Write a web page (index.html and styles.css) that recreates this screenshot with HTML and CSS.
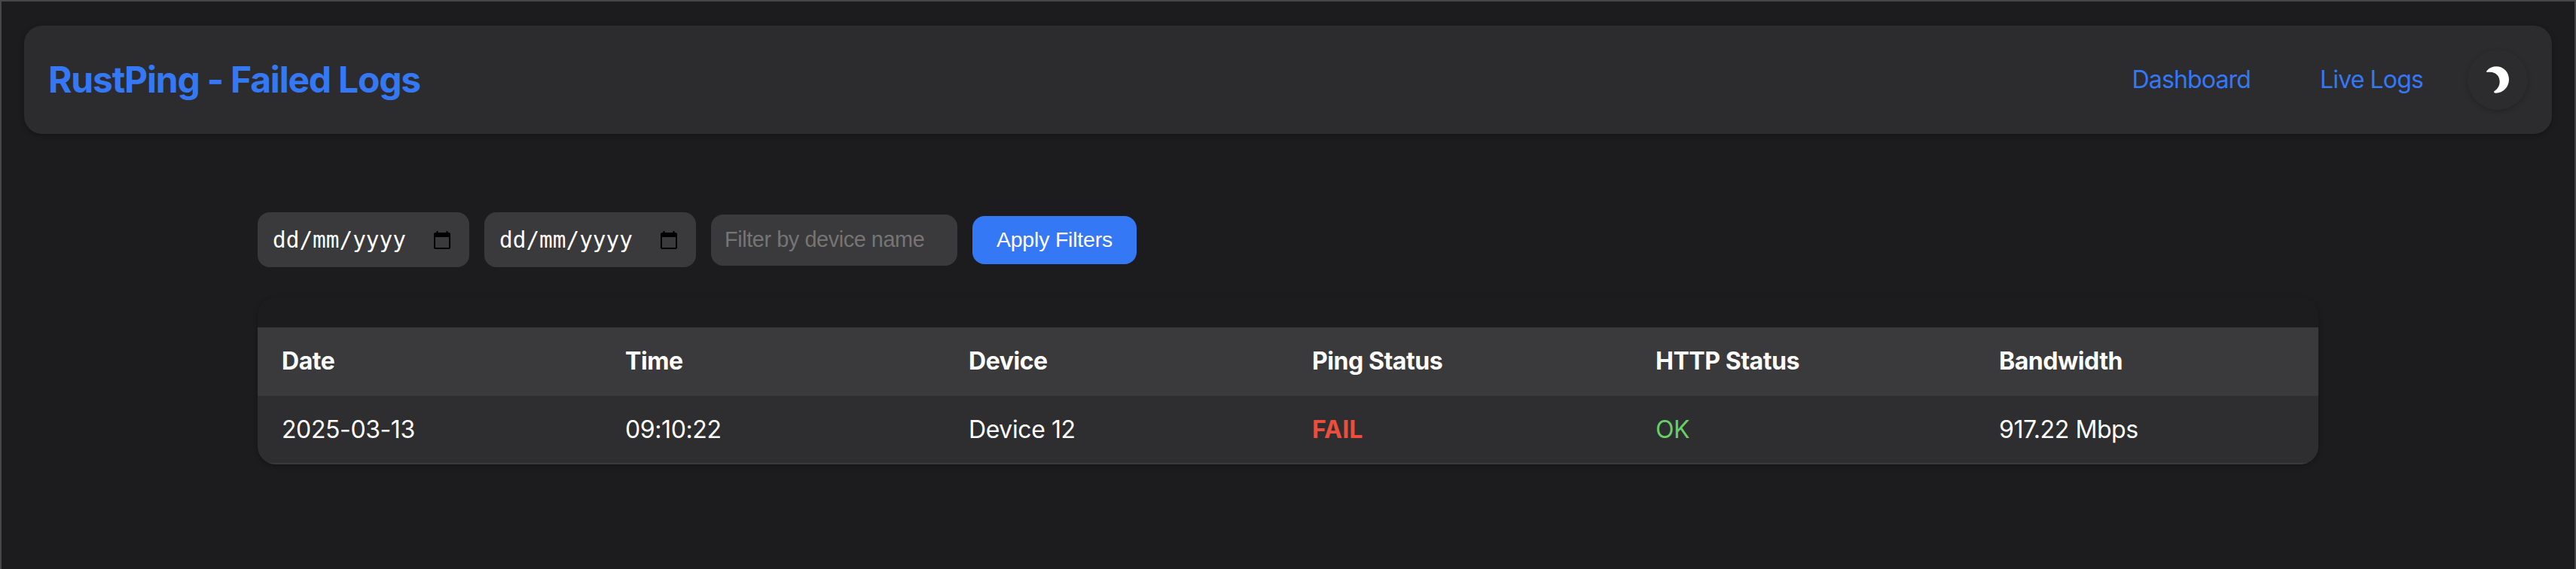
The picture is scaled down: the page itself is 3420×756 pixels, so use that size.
FILE: index.html
```html
<!DOCTYPE html>
<html lang="en">
<head>
<meta charset="utf-8">
<title>RustPing - Failed Logs</title>
<link rel="stylesheet" href="styles.css">
</head>
<body>
<header class="header">
  <h1 class="title">RustPing - Failed Logs</h1>
  <nav class="nav">
    <a class="link dash">Dashboard</a>
    <a class="link live">Live Logs</a>
    <button class="toggle" aria-label="Toggle theme">
      <svg width="32" height="38" viewBox="0 0 32 38"><path d="M1.4 7.2C5 3 9.500 1.300 14 1.300C24 1.300 31 9 31 18.500C31 28.500 23.500 36.700 13.500 36.700C10.800 36.700 10.300 34.800 12.300 33.600C16.300 30.800 18.700 26.500 18.700 21.500C18.700 13.500 12.800 8.400 5.500 8.700C4 8.700 3 8.900 2 8.900C1 8.900 0.800 8 1.400 7.200Z" fill="#fff"/></svg>
    </button>
  </nav>
</header>
<main class="main">
  <form class="filters">
    <div class="field date"><span class="mono">dd/mm/yyyy</span><svg class="cal" width="22" height="24" viewBox="0 0 22 24"><path fill="#000" fill-rule="evenodd" d="M3.500 0h2v2h11V0h2v2H20a2 2 0 0 1 2 2v18a2 2 0 0 1-2 2H2a2 2 0 0 1-2-2V4a2 2 0 0 1 2-2h1.500zM2 8v14h18V8z"/></svg></div>
    <div class="field date"><span class="mono">dd/mm/yyyy</span><svg class="cal" width="22" height="24" viewBox="0 0 22 24"><path fill="#000" fill-rule="evenodd" d="M3.500 0h2v2h11V0h2v2H20a2 2 0 0 1 2 2v18a2 2 0 0 1-2 2H2a2 2 0 0 1-2-2V4a2 2 0 0 1 2-2h1.500zM2 8v14h18V8z"/></svg></div>
    <input class="field device" type="text" placeholder="Filter by device name">
    <button class="apply" type="button">Apply Filters</button>
  </form>
  <section class="logs">
    <div class="row head"><span>Date</span><span>Time</span><span>Device</span><span>Ping Status</span><span>HTTP Status</span><span>Bandwidth</span></div>
    <div class="row entry"><span>2025-03-13</span><span>09:10:22</span><span>Device 12</span><span class="fail">FAIL</span><span class="ok">OK</span><span>917.22 Mbps</span></div>
  </section>
</main>
</body>
</html>
```
FILE: styles.css
```css
* { box-sizing: border-box; }
body {
  margin: 0;
  height: 756px;
  padding: 32px 30px 0;
  border: 2px solid #474749;
  border-bottom: 0;
  background: #1c1c1e;
  color: #fff;
  font: 32px/1.2 Inter, sans-serif;
}
.header {
  display: flex;
  align-items: center;
  justify-content: space-between;
  height: 144px;
  padding: 32px;
  border-radius: 24px;
  background: #2c2c2e;
  box-shadow: 0 2px 6px rgba(0, 0, 0, 0.3);
}
.title { margin: 0; font-size: 48px; font-weight: 700; line-height: 58px; color: #3478f6; letter-spacing: -1.22px; }
.nav { display: flex; align-items: center; }
.link { color: #3478f6; letter-spacing: -0.85px; }
.dash { margin-right: 92px; }
.live { margin-right: 59px; }
.toggle {
  display: flex;
  align-items: center;
  justify-content: center;
  width: 80px;
  height: 80px;
  padding: 0;
  border: 0;
  border-radius: 50%;
  background: #2c2c2e;
  box-shadow: 0 2px 6px rgba(0, 0, 0, 0.22);
}
.main { padding: 104px 310px 0; }
.filters { display: flex; align-items: center; gap: 20px; }
.field { border: 0; border-radius: 16px; background: #3a3a3c; }
.date { display: flex; align-items: center; justify-content: space-between; width: 281px; height: 73px; padding: 0 25px 0 20px; }
.mono { font: 29.4px/40px "DejaVu Sans Mono", monospace; }
.device { width: 327px; height: 68px; padding: 0 18px; font: 28.8px "Liberation Sans", Arial, sans-serif; letter-spacing: -0.4px; color: #fff; }
.device::placeholder { color: #757575; opacity: 1; }
.apply { width: 218px; height: 64px; padding: 0; border: 0; border-radius: 16px; background: #3478f6; color: #fff; font: 28.5px "Liberation Sans", Arial, sans-serif; letter-spacing: -0.2px; }
.logs {
  margin-top: 40px;
  padding-top: 40px;
  border-radius: 24px;
  overflow: hidden;
  box-shadow: 0 2px 6px rgba(0, 0, 0, 0.3);
}
.row { display: grid; grid-template-columns: repeat(6, 1fr); align-items: center; height: 91px; }
.row span { padding-left: 32px; }
.head { background: #3a3a3c; font-weight: 700; letter-spacing: -0.45px; }
.entry { padding-top: 2px; background: #2e2e30; border-bottom: 2px solid #3a3a3c; letter-spacing: -0.4px; }
.fail { color: #eb4e3d; font-weight: 700; letter-spacing: 0.2px; }
.ok { color: #68ce67; }
```
